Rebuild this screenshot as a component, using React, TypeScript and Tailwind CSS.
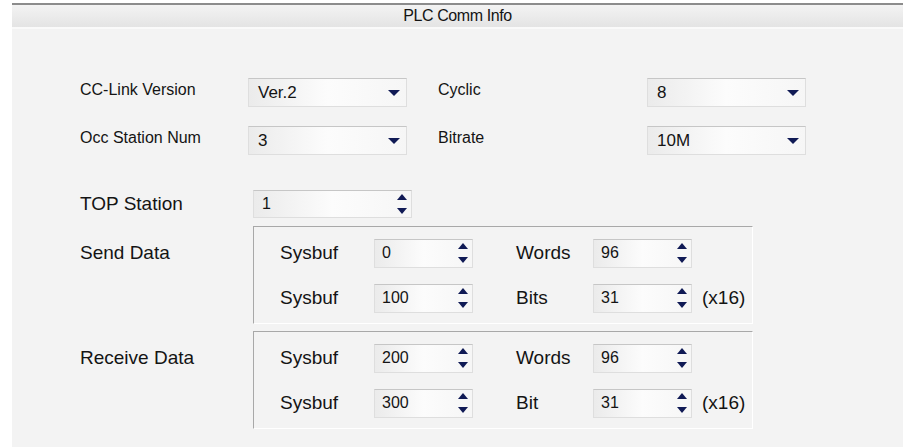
import React from "react";

// small navy triangles used by the combo and spin controls
function Caret() {
  return (
    <svg width="12" height="6" viewBox="0 0 12 6">
      <path d="M0 0h12L6 6z" fill="#101a55" />
    </svg>
  );
}

function SpinArrows() {
  return (
    <div className="flex flex-col items-center gap-[8px]">
      <svg width="10" height="6" viewBox="0 0 10 6">
        <path d="M5 0L10 6H0z" fill="#101a55" />
      </svg>
      <svg width="10" height="6" viewBox="0 0 10 6">
        <path d="M0 0h10L5 6z" fill="#101a55" />
      </svg>
    </div>
  );
}

const boxCls =
  "flex items-center justify-between border border-[#dedede] border-t-[#c6c6c6] bg-gradient-to-r from-[#ebebeb] via-[#fcfcfc] to-[#f6f6f6]";

function Combo({ value }: { value: string }) {
  return (
    <div className={`${boxCls} w-[159px] h-[29px] pl-[9px] pr-[6px] text-[17px]`}>
      <span>{value}</span>
      <Caret />
    </div>
  );
}

function Spin({ value, w }: { value: string; w: string }) {
  return (
    <div className={`${boxCls} ${w} h-[29px] pl-[7px] pr-[4px] text-[16px]`}>
      <span>{value}</span>
      <SpinArrows />
    </div>
  );
}

type DataRow = { buf: string; label: string; count: string; x16?: boolean };

function DataGroup({ title, rows }: { title: string; rows: DataRow[] }) {
  return (
    <div className="flex items-start">
      <div className="w-[173px] h-[29px] mt-[13px] flex items-center">{title}</div>
      <div className="w-[500px] flex flex-col gap-[16px] pt-[12px] pb-[10px] border-t border-l border-[#a8a8a8] border-b border-r border-b-white border-r-white">
        {rows.map((r, i) => (
          <div key={i} className="flex items-center h-[29px] pl-[26px]">
            <span className="w-[94px]">Sysbuf</span>
            <Spin value={r.buf} w="w-[99px]" />
            <span className="ml-[43px] w-[77px]">{r.label}</span>
            <Spin value={r.count} w="w-[99px]" />
            {r.x16 && <span className="ml-[10px]">(x16)</span>}
          </div>
        ))}
      </div>
    </div>
  );
}

export default function App() {
  return (
    <div className="w-[903px] h-[447px] bg-white pl-[12px] pt-[3px] font-['Liberation_Sans',Arial,sans-serif] text-[#141414]">
      <div className="h-full flex flex-col bg-[#f3f3f3]">
        <div className="h-[26px] shrink-0 border-t-2 border-t-[#8c8c8c] border-b-2 border-b-[#fafafa] bg-gradient-to-b from-[#f3f3f3] to-[#e4e4e4] flex items-center justify-center text-[16px] tracking-[-0.4px]">
          PLC Comm Info
        </div>

        <div className="pl-[68px] pt-[49px] flex flex-col">
          {/* CC-Link settings */}
          <div className="flex flex-col gap-[19px] text-[16px]">
            <div className="flex items-center">
              <span className="w-[168px] pb-[5px]">CC-Link Version</span>
              <Combo value="Ver.2" />
              <span className="ml-[31px] w-[209px] pb-[5px]">Cyclic</span>
              <Combo value="8" />
            </div>
            <div className="flex items-center">
              <span className="w-[168px] pb-[5px]">Occ Station Num</span>
              <Combo value="3" />
              <span className="ml-[31px] w-[209px] pb-[5px]">Bitrate</span>
              <Combo value="10M" />
            </div>
          </div>

          <div className="mt-[35px] flex flex-col gap-[7px] text-[19px]">
            <div className="flex items-center">
              <span className="w-[173px]">TOP Station</span>
              <div className={`${boxCls} w-[159px] h-[28px] pl-[8px] pr-[4px] text-[16px]`}>
                <span>1</span>
                <SpinArrows />
              </div>
            </div>

            <DataGroup
              title="Send Data"
              rows={[
                { buf: "0", label: "Words", count: "96" },
                { buf: "100", label: "Bits", count: "31", x16: true },
              ]}
            />
            <DataGroup
              title="Receive Data"
              rows={[
                { buf: "200", label: "Words", count: "96" },
                { buf: "300", label: "Bit", count: "31", x16: true },
              ]}
            />
          </div>
        </div>
      </div>
    </div>
  );
}
